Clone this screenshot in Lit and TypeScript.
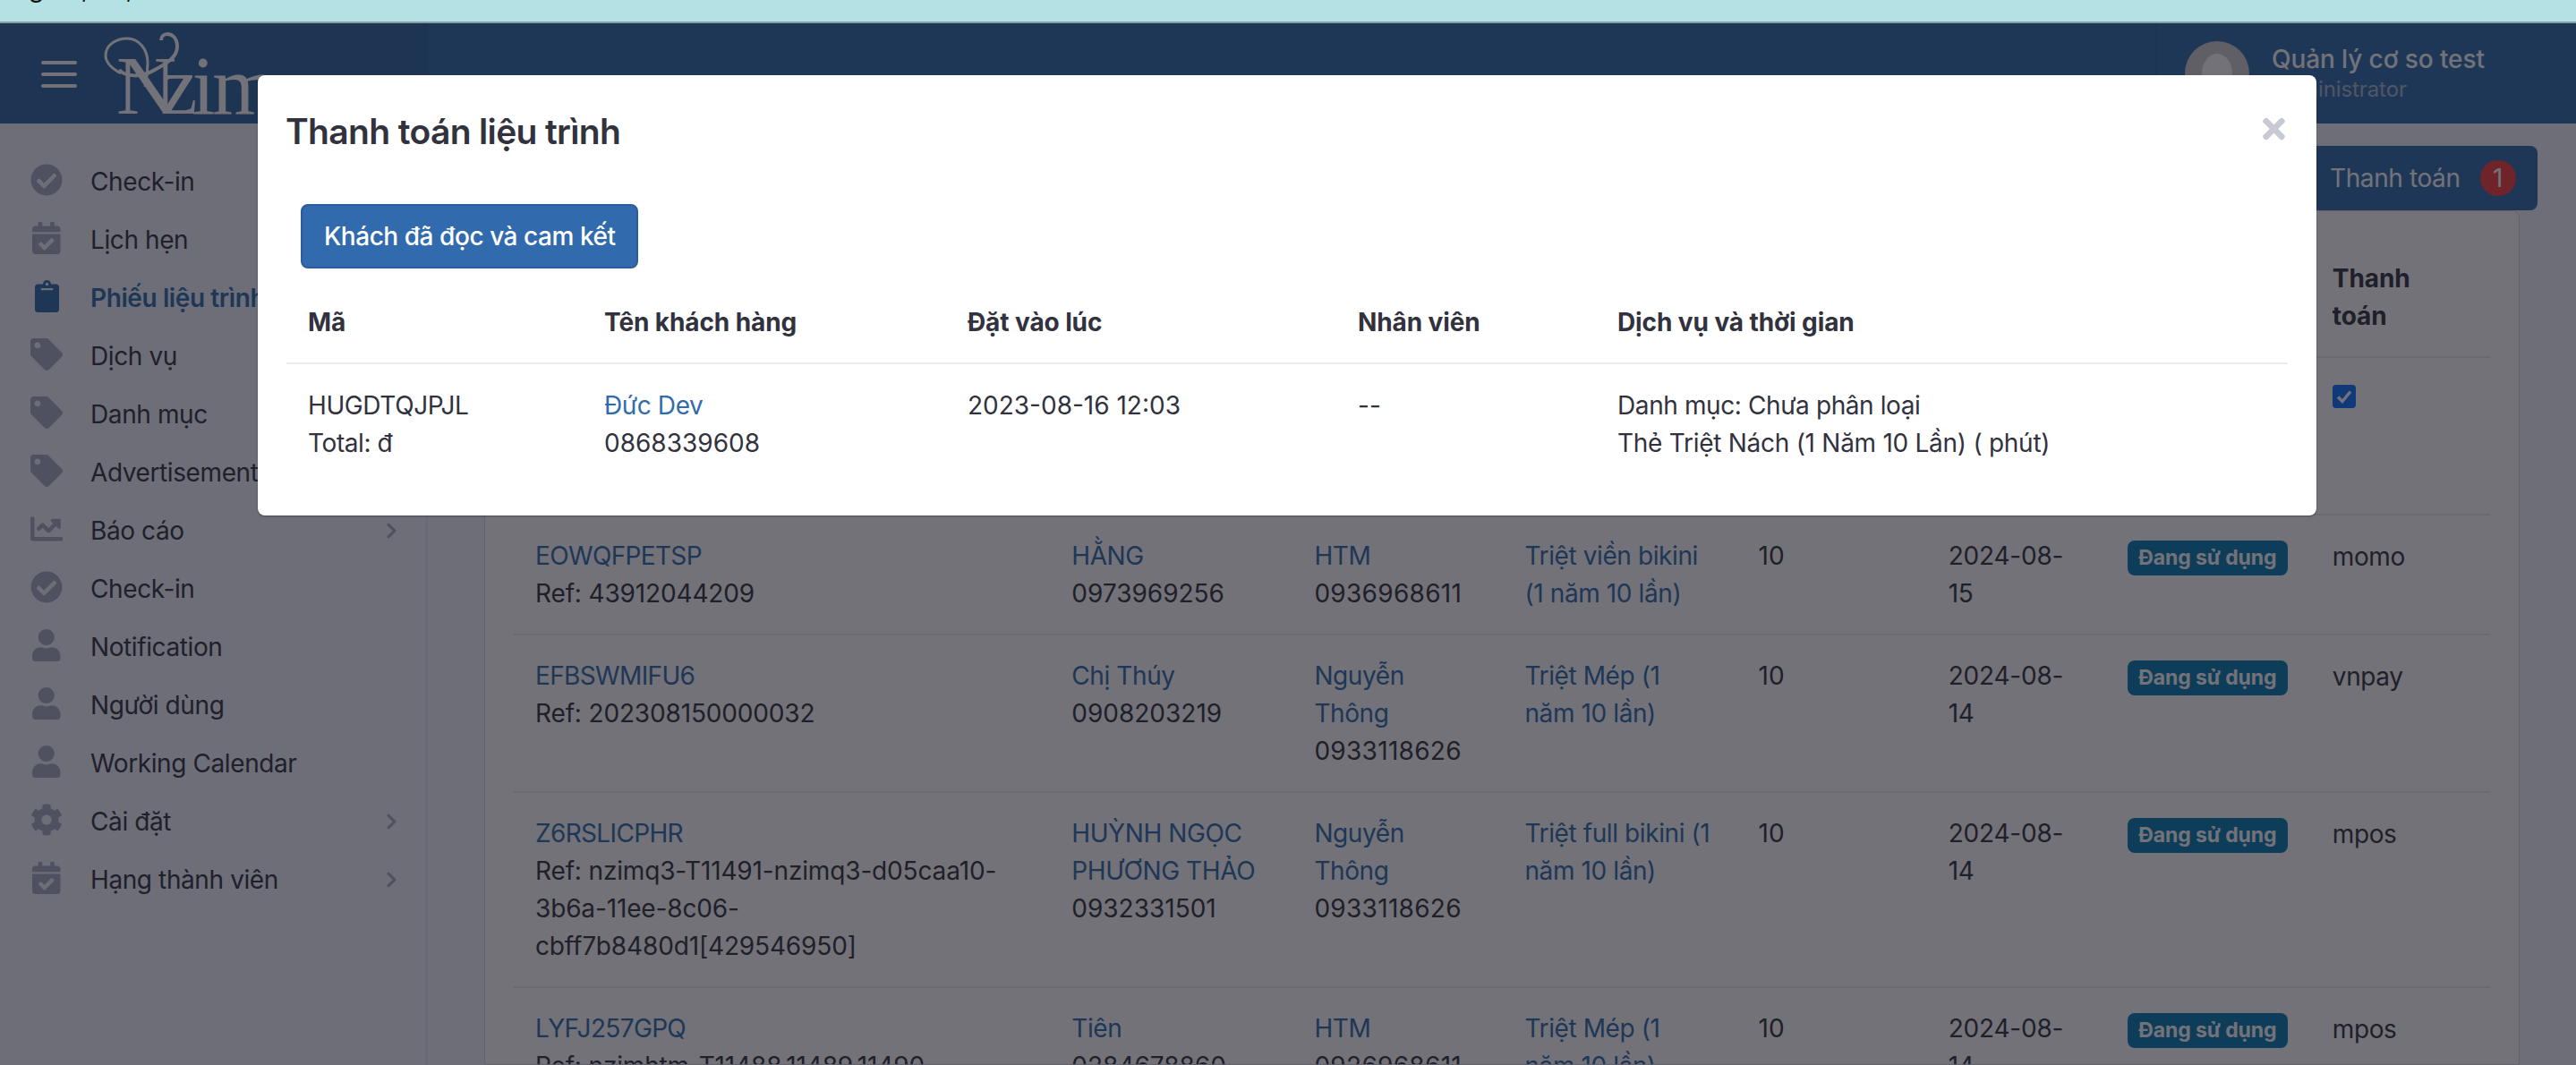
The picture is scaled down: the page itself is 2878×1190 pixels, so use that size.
import { LitElement, html, css, svg } from "lit";
import { customElement } from "lit/decorators.js";

const I: Record<string, [number, string]> = {
  check: [512, "M504 256c0 136.967-111.033 248-248 248S8 392.967 8 256 119.033 8 256 8s248 111.033 248 248zM227.314 387.314l184-184c6.248-6.248 6.248-16.379 0-22.627l-22.627-22.627c-6.248-6.249-16.379-6.249-22.628 0L216 308.118l-70.059-70.059c-6.248-6.248-16.379-6.248-22.628 0l-22.627 22.627c-6.248 6.248-6.248 16.379 0 22.627l104 104c6.249 6.249 16.379 6.249 22.628.001z"],
  cal: [448, "M436 160H12c-6.627 0-12-5.373-12-12v-36c0-26.51 21.49-48 48-48h48V12c0-6.627 5.373-12 12-12h40c6.627 0 12 5.373 12 12v52h128V12c0-6.627 5.373-12 12-12h40c6.627 0 12 5.373 12 12v52h48c26.51 0 48 21.49 48 48v36c0 6.627-5.373 12-12 12zM12 192h424c6.627 0 12 5.373 12 12v260c0 26.51-21.49 48-48 48H48c-26.51 0-48-21.49-48-48V204c0-6.627 5.373-12 12-12zm333.296 95.947l-28.169-28.398c-4.667-4.705-12.265-4.736-16.970-.068L194.12 364.665l-45.98-46.352c-4.667-4.705-12.266-4.736-16.971-.068l-28.397 28.170c-4.705 4.667-4.736 12.265-.068 16.970l82.601 83.269c4.667 4.705 12.265 4.736 16.970.068l142.953-141.805c4.705-4.667 4.736-12.265.068-16.970z"],
  clip: [384, "M384 112v352c0 26.51-21.49 48-48 48H48c-26.51 0-48-21.49-48-48V112c0-26.51 21.49-48 48-48h80c0-35.29 28.71-64 64-64s64 28.71 64 64h80c26.51 0 48 21.49 48 48zM192 40c-13.255 0-24 10.745-24 24s10.745 24 24 24 24-10.745 24-24-10.745-24-24-24m96 114v-20a6 6 0 0 0-6-6H102a6 6 0 0 0-6 6v20a6 6 0 0 0 6 6h180a6 6 0 0 0 6-6z"],
  tag: [512, "M0 252.118V48C0 21.49 21.49 0 48 0h204.118a48 48 0 0 1 33.941 14.059l211.882 211.882c18.745 18.745 18.745 49.137 0 67.882L293.823 497.941c-18.745 18.745-49.137 18.745-67.882 0L14.059 286.059A48 48 0 0 1 0 252.118zM112 64c-26.51 0-48 21.49-48 48s21.49 48 48 48 48-21.49 48-48-21.49-48-48-48z"],
  chart: [512, "M496 384H64V80c0-8.84-7.16-16-16-16H16C7.16 64 0 71.16 0 80v336c0 17.67 14.33 32 32 32h464c8.84 0 16-7.16 16-16v-32c0-8.84-7.16-16-16-16zM464 96H345.94c-21.38 0-32.09 25.85-16.97 40.97l32.4 32.4L288 242.75l-73.37-73.37c-12.5-12.5-32.76-12.5-45.25 0l-68.69 68.69c-6.25 6.25-6.25 16.38 0 22.63l22.62 22.62c6.25 6.25 16.38 6.25 22.63 0L192 237.25l73.37 73.37c12.5 12.5 32.76 12.5 45.25 0l96-96 32.4 32.4c15.12 15.12 40.97 4.41 40.97-16.97V112c.01-8.84-7.15-16-15.99-16z"],
  user: [448, "M224 256c70.7 0 128-57.3 128-128S294.7 0 224 0 96 57.3 96 128s57.3 128 128 128zm89.6 32h-16.7c-22.2 10.2-46.9 16-72.9 16s-50.6-5.8-72.9-16h-16.7C60.2 288 0 348.2 0 422.4V464c0 26.5 21.5 48 48 48h352c26.5 0 48-21.5 48-48v-41.6c0-74.2-60.2-134.4-134.4-134.4z"],
  cog: [512, "M487.4 315.7l-42.6-24.6c4.3-23.2 4.3-47 0-70.2l42.6-24.6c4.9-2.8 7.1-8.6 5.5-14-11.1-35.6-30-67.8-54.7-94.6-3.8-4.1-10-5.1-14.8-2.3L380.8 110c-17.9-15.4-38.5-27.3-60.8-35.1V25.8c0-5.6-3.9-10.5-9.4-11.7-36.7-8.2-74.3-7.8-109.2 0-5.5 1.2-9.4 6.1-9.4 11.7V75c-22.2 7.9-42.8 19.8-60.8 35.1L88.7 85.500c-4.900-2.800-11-1.900-14.800 2.300-24.700 26.700-43.600 58.900-54.700 94.600-1.700 5.400.6 11.200 5.500 14L67.300 221c-4.300 23.200-4.300 47 0 70.200l-42.600 24.600c-4.900 2.800-7.100 8.600-5.500 14 11.100 35.600 30 67.800 54.700 94.600 3.800 4.100 10 5.100 14.800 2.300l42.600-24.600c17.900 15.400 38.500 27.300 60.800 35.100v49.200c0 5.600 3.900 10.500 9.400 11.700 36.700 8.200 74.300 7.800 109.200 0 5.500-1.200 9.400-6.100 9.400-11.700v-49.200c22.200-7.900 42.800-19.800 60.800-35.100l42.600 24.600c4.900 2.800 11 1.900 14.800-2.300 24.700-26.700 43.600-58.900 54.700-94.600 1.500-5.500-.7-11.300-5.600-14.100zM256 336c-44.100 0-80-35.900-80-80s35.900-80 80-80 80 35.900 80 80-35.900 80-80 80z"],
};
const CHEVRON = "M285.476 272.971L91.132 467.314c-9.373 9.373-24.569 9.373-33.941 0l-22.667-22.667c-9.357-9.357-9.375-24.522-.04-33.901L188.505 256 34.484 101.255c-9.335-9.379-9.317-24.544.04-33.901l22.667-22.667c9.373-9.373 24.569-9.373 33.941 0L285.475 239.03c9.373 9.372 9.373 24.568.001 33.941z";
const TIMES = "M242.72 256l100.07-100.07c12.28-12.28 12.28-32.19 0-44.48l-22.24-22.24c-12.28-12.28-32.19-12.28-44.48 0L176 189.28 75.93 89.21c-12.28-12.28-32.19-12.28-44.48 0L9.21 111.45c-12.28 12.28-12.28 32.19 0 44.48L109.28 256 9.21 356.07c-12.28 12.28-12.28 32.19 0 44.48l22.24 22.24c12.28 12.28 32.2 12.28 44.48 0L176 322.72l100.07 100.07c12.28 12.28 32.2 12.28 44.48 0l22.24-22.24c12.28-12.28 12.28-32.19 0-44.48L242.72 256z";

const icon = (k: string) => {
  const [w, d] = I[k];
  return html`<svg class="ico" viewBox="0 0 ${w} 512" style="width:${(w / 512) * 36}px">${svg`<path fill="currentColor" d="${d}"/>`}</svg>`;
};

const NAV: [string, string, boolean?, boolean?][] = [
  ["check", "Check-in"],
  ["cal", "Lịch hẹn"],
  ["clip", "Phiếu liệu trình", false, true],
  ["tag", "Dịch vụ"],
  ["tag", "Danh mục"],
  ["tag", "Advertisement"],
  ["chart", "Báo cáo", true],
  ["check", "Check-in"],
  ["user", "Notification"],
  ["user", "Người dùng"],
  ["user", "Working Calendar"],
  ["cog", "Cài đặt", true],
  ["cal", "Hạng thành viên", true],
];

const ROWS = [
  ["EOWQFPETSP", "Ref: 43912044209", "HẰNG", "0973969256", "HTM", "0936968611", "Triệt viền bikini (1 năm 10 lần)", "2024-08-15", "momo"],
  ["EFBSWMIFU6", "Ref: 202308150000032", "Chị Thúy", "0908203219", "Nguyễn Thông", "0933118626", "Triệt Mép (1 năm 10 lần)", "2024-08-14", "vnpay"],
  ["Z6RSLICPHR", "Ref: nzimq3-T11491-nzimq3-d05caa10-3b6a-11ee-8c06-cbff7b8480d1[429546950]", "HUỲNH NGỌC PHƯƠNG THẢO", "0932331501", "Nguyễn Thông", "0933118626", "Triệt full bikini (1 năm 10 lần)", "2024-08-14", "mpos"],
  ["LYFJ257GPQ", "Ref: nzimhtm-T11488.11489.11490", "Tiên", "0284678860", "HTM", "0926968611", "Triệt Mép (1 năm 10 lần)", "2024-08-14", "mpos"],
];
const BG_COLS = [599, 271, 235, 261, 212, 200, 229, 200];
const MODAL_COLS = [331, 406, 436, 290, 773];

@customElement("app-root")
export class AppRoot extends LitElement {
  static styles = css`
    :host {
      display: block;
      position: relative;
      width: 2878px;
      height: 1190px;
      overflow: hidden;
      font-family: Inter, "Liberation Sans", sans-serif;
      font-size: 28px;
      line-height: 42px;
      letter-spacing: -0.4px;
      color: #32323e;
    }
    * { box-sizing: border-box; }
    .n { letter-spacing: 0; }
    .r { letter-spacing: -0.15px; }
    .s { letter-spacing: 0.3px; }
    .d { letter-spacing: -0.2px; }
    .l2 { letter-spacing: -0.27px; }
    .banner {
      height: 26px;
      background: #b4e2e4;
      border-bottom: 2px solid #7fa3a6;
      overflow: hidden;
      display: flex;
      gap: 42px;
      padding-left: 32px;
      color: #111;
      font-size: 28px;
      line-height: 28px;
    }
    .banner span { margin-top: -27px; }
    .page { height: 1164px; display: flex; flex-direction: column; background: #f2f5ff; }
    .nav { height: 112px; flex: none; display: flex; background: #316bad; }
    .brand {
      width: 478px;
      flex: none;
      background: #2e64a4;
      display: flex;
      align-items: flex-start;
      padding-left: 46px;
      color: #fff;
    }
    .burger { width: 40px; display: flex; flex-direction: column; gap: 9px; margin-top: 42px; flex: none; }
    .burger i { display: block; height: 4px; border-radius: 2px; background: #fff; }
    .logo {
      position: relative;
      margin: 14px 0 0 44px;
      font-family: "Liberation Serif", serif;
      font-size: 93px;
      line-height: 112px;
      letter-spacing: -3px;
      color: #fff;
      white-space: nowrap;
    }
    .logo .cap { letter-spacing: -18px; }
    .logo .z { letter-spacing: -6px; }
    .logo svg { position: absolute; left: -12px; top: -10px; width: 90px; height: 80px; overflow: visible; }
    .spacer { flex: 1; }
    .userbox {
      width: 470px;
      flex: none;
      border-left: 2px solid #2c62a0;
      display: flex;
      padding: 20px 0 0 31px;
      color: #fff;
      letter-spacing: -0.1px;
    }
    .avatar {
      width: 72px;
      height: 72px;
      border-radius: 50%;
      background: #d2cfcf;
      flex: none;
      position: relative;
      overflow: hidden;
    }
    .avatar::after {
      content: "";
      position: absolute;
      left: 19px;
      top: 14px;
      width: 34px;
      height: 44px;
      border-radius: 50%;
      background: #fff;
    }
    .uinfo { margin-left: 25px; }
    .uname { font-weight: 500; line-height: 42px; margin-top: -1px; }
    .urole { font-size: 24px; line-height: 30px; color: #aab8cc; margin-top: -2px; }
    .body { flex: 1; display: flex; min-height: 0; }
    .side { width: 478px; flex: none; padding-top: 32px; border-right: 2px solid #e6e8f4; }
    .item {
      height: 65px;
      display: flex;
      align-items: center;
      padding-left: 34px;
      color: #32323e;
      white-space: nowrap;
      position: relative;
    }
    .item.on { color: #316bad; font-weight: 600; }
    .ibox { width: 36px; display: flex; justify-content: center; margin-right: 31px; flex: none; color: #a7acc3; margin-bottom: 4px; }
    .item.on .ibox { color: #316bad; }
    .ico { height: 36px; display: block; }
    .chev { position: absolute; left: 431px; top: 23px; width: 13px; height: 20px; color: #a7acc3; }
    .main { flex: 1; min-width: 0; padding: 25px 43px 0 63px; display: flex; flex-direction: column; }
    .toolbar { display: flex; justify-content: flex-end; height: 72px; flex: none; }
    .pay {
      width: 380px;
      background: #316bad;
      border-radius: 8px;
      color: #fff;
      display: flex;
      align-items: center;
      padding-left: 148px;
      gap: 20px;
    }
    .pay b {
      width: 40px;
      height: 40px;
      border-radius: 50%;
      background: #f53c37;
      font-weight: 400;
      display: flex;
      align-items: center;
      justify-content: center;
      margin-left: 2px;
    }
    .card {
      margin-right: 20px;
      background: #fff;
      border: 1px solid #d8d8e2;
      border-radius: 8px 8px 0 0;
      padding: 30px 32px 0;
      flex: 1;
      overflow: hidden;
    }
    table { border-collapse: collapse; table-layout: fixed; width: 100%; }
    th { font-weight: 700; letter-spacing: -0.1px; text-align: left; vertical-align: top; padding: 24px; border-bottom: 2px solid #ebebf0; }
    td { vertical-align: top; padding: 24px; border-bottom: 2px solid #ebebf0; }
    a { color: #316bad; text-decoration: none; }
    a.code { letter-spacing: -0.65px; }
    .badge {
      display: inline-block;
      background: #057ab4;
      color: #fff;
      font-size: 23px;
      letter-spacing: -0.1px;
      font-weight: 700;
      line-height: 39px;
      height: 39px;
      padding: 0 12.5px;
      border-radius: 8px;
      margin-top: 4px;
      vertical-align: top;
      white-space: nowrap;
    }
    .cb { width: 26px; height: 26px; display: block; margin-top: 6px; }
    .pm { padding-top: 25px; }
    .backdrop { position: absolute; left: 0; right: 0; top: 26px; bottom: 0; background: rgba(20, 20, 30, 0.6); }
    .modal {
      position: absolute;
      left: 288px;
      top: 84px;
      width: 2300px;
      height: 492px;
      background: #fff;
      border-radius: 8px;
      box-shadow: 0 1px 2px rgba(0, 0, 0, 0.35);
      padding: 33px 32px 0 31px;
    }
    .mhead { display: flex; justify-content: space-between; height: 111px; }
    .mhead h2 { margin: 0; font-size: 39px; line-height: 60px; font-weight: 600; letter-spacing: -0.65px; }
    .close { width: 27px; height: 36px; margin: 9px 2px 0 0; color: #c7c9d3; }
    .btn {
      display: inline-block;
      margin-left: 17px;
      height: 72px;
      background: #316bad;
      border: 2px solid #2a5d9a;
      border-radius: 8px;
      color: #fff;
      padding: 13px 23px 13px 24px;
      font: inherit;
      letter-spacing: -0.45px;
      font-weight: 500;
    }
    .mtable { margin: 15px 0 0 1px; width: 2236px; }
    .mtable td { padding: 25px 24px; border-bottom: 0; }
  `;

  render() {
    return html`
      <div class="banner"><span>g</span><span>,</span><span>,</span></div>
      <div class="page">
        <header class="nav">
          <div class="brand">
            <div class="burger"><i></i><i></i><i></i></div>
            <div class="logo">
              <span class="cap">N</span><span class="z">z</span>im
              <svg viewBox="0 0 90 80" fill="none" stroke="currentColor" stroke-width="3">
                <path d="M17 52C6 46 0 40 0 32 0 20 12 13 24 13 38 13 47 26 47 40 47 50 46 58 44 67" />
                <path d="M15 48C22 56 40 57 55 48 68 41 80 34 80 22 80 12 74 8 69 8 65 8 62 11 62 15" stroke-width="4" />
              </svg>
            </div>
          </div>
          <div class="spacer"></div>
          <div class="userbox">
            <div class="avatar"></div>
            <div class="uinfo">
              <div class="uname">Quản lý cơ so test</div>
              <div class="urole">Administrator</div>
            </div>
          </div>
        </header>
        <div class="body">
          <aside class="side">
            ${NAV.map(
              ([k, t, ch, on]) => html`<div class="item ${on ? "on" : ""}">
                <span class="ibox">${icon(k)}</span>${t}
                ${ch ? html`<svg class="chev" viewBox="0 0 320 512"><path fill="currentColor" d="${CHEVRON}" /></svg>` : ""}
              </div>`
            )}
          </aside>
          <main class="main">
            <div class="toolbar">
              <div class="pay">Thanh toán <b>1</b></div>
            </div>
            <div class="card">
              <table>
                <colgroup>${BG_COLS.map((w) => html`<col style="width:${w}px" />`)}</colgroup>
                <thead>
                  <tr>
                    <th>Mã</th><th>Khách hàng</th><th>Nhân viên</th><th>Dịch vụ</th><th>Số lần</th><th>Hết hạn</th><th>Trạng thái</th><th>Thanh<br />toán</th>
                  </tr>
                </thead>
                <tbody>
                  <tr>
                    <td>&nbsp;<br />&nbsp;<br />&nbsp;</td><td></td><td></td><td></td><td></td><td></td><td></td>
                    <td><svg class="cb" viewBox="0 0 26 26"><rect width="26" height="26" rx="4" fill="#0d6efd" /><path d="M6 13.5l5 5 9-11" fill="none" stroke="#fff" stroke-width="3.5" /></svg></td>
                  </tr>
                  ${ROWS.map(
                    (r) => html`<tr>
                      <td><a class="code" href="#">${r[0]}</a><br /><span class="r">${r[1]}</span></td>
                      <td><a href="#">${r[2]}</a><br /><span class="n">${r[3]}</span></td>
                      <td><a href="#">${r[4]}</a><br /><span class="s">${r[5]}</span></td>
                      <td><a href="#">${r[6]}</a></td>
                      <td class="n">10</td>
                      <td class="d">${r[7]}</td>
                      <td><span class="badge">Đang sử dụng</span></td>
                      <td class="pm">${r[8]}</td>
                    </tr>`
                  )}
                </tbody>
              </table>
            </div>
          </main>
        </div>
      </div>
      <div class="backdrop"></div>
      <section class="modal">
        <div class="mhead">
          <h2>Thanh toán liệu trình</h2>
          <svg class="close" viewBox="0 0 352 512"><path fill="currentColor" d="${TIMES}" /></svg>
        </div>
        <button class="btn">Khách đã đọc và cam kết</button>
        <table class="mtable">
          <colgroup>${MODAL_COLS.map((w) => html`<col style="width:${w}px" />`)}</colgroup>
          <thead>
            <tr><th>Mã</th><th>Tên khách hàng</th><th>Đặt vào lúc</th><th>Nhân viên</th><th>Dịch vụ và thời gian</th></tr>
          </thead>
          <tbody>
            <tr>
              <td>HUGDTQJPJL<br />Total: đ</td>
              <td><a href="#">Đức Dev</a><br /><span class="n">0868339608</span></td>
              <td class="n">2023-08-16 12:03</td>
              <td class="n">--</td>
              <td>Danh mục: Chưa phân loại<br /><span class="l2">Thẻ Triệt Nách (1 Năm 10 Lần) ( phút)</span></td>
            </tr>
          </tbody>
        </table>
      </section>
    `;
  }
}
